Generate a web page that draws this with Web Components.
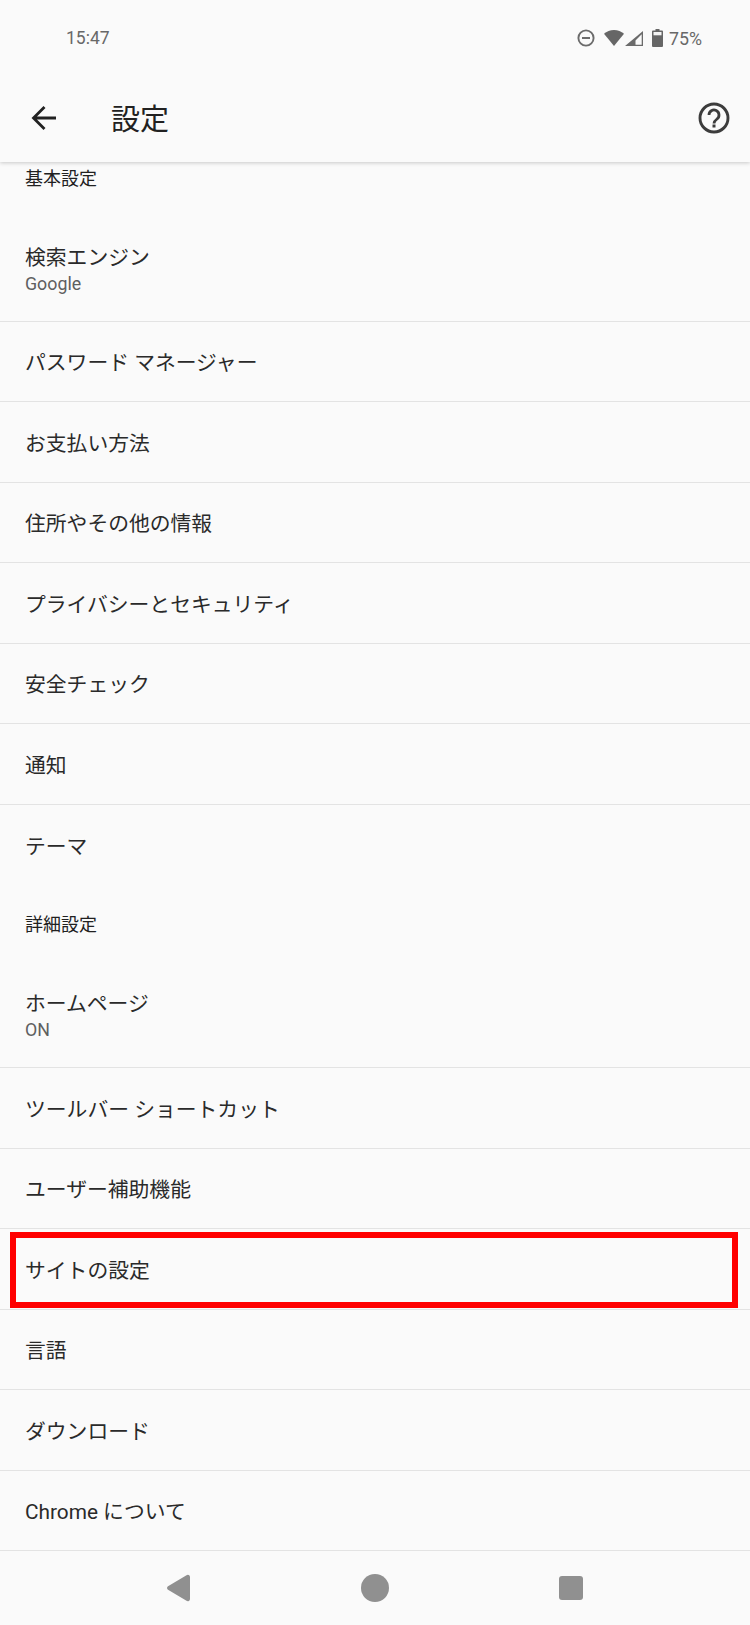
<!DOCTYPE html>
<html lang="ja"><head><meta charset="utf-8"><title>設定</title>
<style>
html,body{margin:0;padding:0;background:#fafafa}
body{width:750px;height:1625px;overflow:hidden;font-family:Roboto,"Noto Sans CJK JP",sans-serif}
</style></head><body>
<settings-app></settings-app>
<script>
function def(name,css,html){
  customElements.define(name,class extends HTMLElement{
    constructor(){super();const r=this.attachShadow({mode:'open'});r.innerHTML='<style>'+css+'</style>'+(typeof html==='function'?html(this):html);}
  });
}
const FONT='Roboto,"Noto Sans CJK JP",sans-serif';
def('status-bar',`:host{display:flex;align-items:center;height:74px;box-sizing:border-box;padding:2px 48px 0 66px;color:#686868;font:17.500px ${FONT}}
.t{flex:1}svg{display:block;flex:none}.i{display:flex;align-items:center}.p{font-size:17.800px}`,
`<span class="t">15:47</span><div class="i">
<svg width="18" height="18" viewBox="0 0 18 18" style="margin-right:9px"><circle cx="9" cy="9" r="7.600" fill="none" stroke="#6b6b6b" stroke-width="1.900"/><rect x="5" y="8" width="8" height="2" fill="#6b6b6b"/></svg>
<svg width="20" height="16" viewBox="0 0 20 16" style="margin-right:1px"><path d="M0 3.800C2.700 1.400 6.200 0 10 0s7.300 1.400 10 3.800L10 16z" fill="#666"/></svg>
<svg width="18" height="15" viewBox="0 0 18 15" style="margin-right:9px"><path d="M18 0v15H0zM16.700 3.200 10.500 9.400V13.700h6.200z" fill="#6b6b6b" fill-rule="evenodd"/></svg>
<svg width="11" height="18" viewBox="0 0 11 18" style="margin-right:6px"><path d="M3.500 0h4v1.500H10a1 1 0 0 1 1 1V17a1 1 0 0 1-1 1H1a1 1 0 0 1-1-1V2.500a1 1 0 0 1 1-1h2.500z" fill="#666"/><rect x="1.500" y="3" width="8" height="3.300" fill="#f4f4f4"/></svg>
<span class="p">75%</span></div>`);
def('tool-bar',`:host{display:flex;align-items:center;height:88px;box-sizing:border-box;padding:0 20px 0 31px;background:#fafafa;position:relative;z-index:2;box-shadow:0 1px 4px rgba(0,0,0,.2);clip-path:inset(0 0 -12px 0);color:#212121}
svg{display:block}h1{flex:1;margin:4px 0 0 54px;font:400 29px/36px ${FONT}}`,
`<svg width="26" height="26" viewBox="0 0 26 26"><path d="M25 13H3M13.500 2 2.500 13l11 11" fill="none" stroke="#212121" stroke-width="2.800"/></svg>
<h1>設定</h1>
<svg width="32" height="32" viewBox="0 0 32 32"><circle cx="16" cy="16" r="14" fill="none" stroke="#3c3c3c" stroke-width="2.900"/><path d="M11 13a5 5 0 1 1 8 4c-2 1.500-3 2.300-3 4.500" fill="none" stroke="#3c3c3c" stroke-width="2.800"/><rect x="14.500" y="22.500" width="3" height="3" fill="#3c3c3c"/></svg>`);
def('section-head',`:host{display:flex;align-items:center;height:65px;box-sizing:border-box;padding:11px 25px 0;font-size:18px;color:#212121;flex:none}`,`<slot></slot>`);
def('setting-row',`:host{display:flex;flex-direction:column;justify-content:center;position:relative;box-sizing:border-box;height:80.500px;padding:4px 25px 0;border-bottom:1.500px solid #e3e3e3;color:#2a2a2a;font-size:20.800px;flex:none}
:host([two]){height:118px;padding-top:14px}
:host([plain]){border-bottom:0}
.s{display:block;font-size:17.800px;color:#5f5f5f;line-height:22px;margin-top:1px}
.t{line-height:28px}`,
t=>`<span class="t"><slot></slot></span>${t.hasAttribute('two')?'<span class="s"><slot name="sub"></slot></span>':''}`);
def('red-box',`:host{position:absolute;left:10px;right:12px;top:3px;height:76px;box-sizing:border-box;border:6px solid #f00;pointer-events:none}`,``);
def('nav-bar',`:host{display:flex;height:74px;box-sizing:border-box;position:relative;background:#fafafa}
.b{position:absolute;top:23px}svg{display:block}`,
`<svg class="b" style="left:166px" width="24" height="28" viewBox="0 0 24 28"><path d="M2 12.300 20.500 1.200A2.200 2.200 0 0 1 24 3v22a2.200 2.200 0 0 1-3.500 1.800L2 15.700a2 2 0 0 1 0-3.400z" fill="#909090"/></svg>
<svg class="b" style="left:361px" width="28" height="28" viewBox="0 0 28 28"><circle cx="14" cy="14" r="14" fill="#909090"/></svg>
<svg class="b" style="left:559px;top:25px" width="24" height="24" viewBox="0 0 24 24"><rect width="24" height="24" rx="3" fill="#909090"/></svg>`);
def('settings-list',`:host{display:flex;flex-direction:column;height:1389px;overflow:hidden;box-sizing:border-box}
.w{display:flex;flex-direction:column;margin-top:-23.400px}`,`<div class="w"><slot></slot></div>`);
def('settings-app',`:host{display:flex;flex-direction:column;width:750px;height:1625px;background:#fafafa;color:#212121}`,
`<status-bar></status-bar><tool-bar></tool-bar>
<settings-list>
<section-head>基本設定</section-head>
<setting-row two>検索エンジン<span slot="sub">Google</span></setting-row>
<setting-row>パスワード マネージャー</setting-row>
<setting-row>お支払い方法</setting-row>
<setting-row>住所やその他の情報</setting-row>
<setting-row>プライバシーとセキュリティ</setting-row>
<setting-row>安全チェック</setting-row>
<setting-row>通知</setting-row>
<setting-row plain>テーマ</setting-row>
<section-head>詳細設定</section-head>
<setting-row two>ホームページ<span slot="sub">ON</span></setting-row>
<setting-row>ツールバー ショートカット</setting-row>
<setting-row>ユーザー補助機能</setting-row>
<setting-row>サイトの設定<red-box></red-box></setting-row>
<setting-row>言語</setting-row>
<setting-row>ダウンロード</setting-row>
<setting-row>Chrome について</setting-row>
</settings-list>
<nav-bar></nav-bar>`);
</script>
</body></html>
